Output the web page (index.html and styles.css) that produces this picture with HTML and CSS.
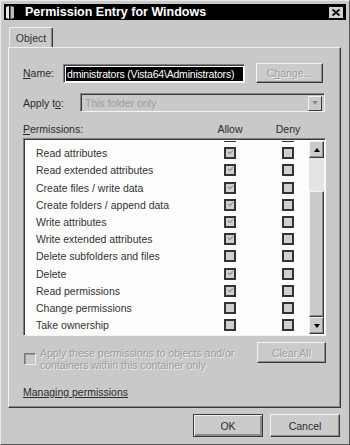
FILE: index.html
```html
<!DOCTYPE html>
<html lang="en">

<head>
    <meta charset="UTF-8">
    <meta name="viewport" content="width=device-width, initial-scale=1.0">
    <title>Permission Entry for Windows</title>
    <link rel="stylesheet" href="styles.css">
</head>

<body>
    <div class="window">
        <div class="titlebar">
            <svg class="title-icon" viewBox="0 0 8 13" width="8" height="13">
                <path d="M0 1 L3 0 L3 13 L0 12 Z" fill="#e8e8e8" />
                <path d="M4.5 0 L8 1 L8 12 L4.5 13 Z" fill="#bdbdbd" />
            </svg>
            <span class="title">Permission Entry for Windows</span>
            <span class="close">
                <svg viewBox="0 0 8 7" width="8" height="7">
                    <path d="M0.5 0.5 L7.5 6.5 M7.5 0.5 L0.5 6.5" stroke="#000" stroke-width="1.8" fill="none" />
                </svg>
            </span>
        </div>

        <div class="tabs">
            <span class="tab">Object</span>
        </div>

        <div class="panel">
            <div class="name-row">
                <span class="label name-label"><u>N</u>ame:</span>
                <div class="textbox">
                    <span class="selected">dministrators (Vista64\Administrators)</span>
                </div>
                <button class="btn change-btn" disabled>C<u>h</u>ange...</button>
            </div>

            <div class="apply-row">
                <span class="label apply-label">Apply t<u>o</u>:</span>
                <div class="select">
                    <span class="select-text">This folder only</span>
                    <span class="select-arrow"><span class="tri-down grey"></span></span>
                </div>
            </div>

            <div class="perm-head">
                <span class="label perm-label"><u>P</u>ermissions:</span>
                <span class="col-head">Allow</span>
                <span class="col-head">Deny</span>
            </div>

            <div class="list">
                <div class="rows">
                    <div class="row partial">
                        <span></span>
                        <span class="cb checked"></span>
                        <span class="cb"></span>
                    </div>
                    <div class="row">
                        <span>Read attributes</span>
                        <span class="cb checked"></span>
                        <span class="cb"></span>
                    </div>
                    <div class="row">
                        <span>Read extended attributes</span>
                        <span class="cb checked"></span>
                        <span class="cb"></span>
                    </div>
                    <div class="row">
                        <span>Create files / write data</span>
                        <span class="cb checked"></span>
                        <span class="cb"></span>
                    </div>
                    <div class="row">
                        <span>Create folders / append data</span>
                        <span class="cb checked"></span>
                        <span class="cb"></span>
                    </div>
                    <div class="row">
                        <span>Write attributes</span>
                        <span class="cb checked"></span>
                        <span class="cb"></span>
                    </div>
                    <div class="row">
                        <span>Write extended attributes</span>
                        <span class="cb checked"></span>
                        <span class="cb"></span>
                    </div>
                    <div class="row">
                        <span>Delete subfolders and files</span>
                        <span class="cb"></span>
                        <span class="cb"></span>
                    </div>
                    <div class="row">
                        <span>Delete</span>
                        <span class="cb checked"></span>
                        <span class="cb"></span>
                    </div>
                    <div class="row">
                        <span>Read permissions</span>
                        <span class="cb checked"></span>
                        <span class="cb"></span>
                    </div>
                    <div class="row">
                        <span>Change permissions</span>
                        <span class="cb"></span>
                        <span class="cb"></span>
                    </div>
                    <div class="row">
                        <span>Take ownership</span>
                        <span class="cb"></span>
                        <span class="cb"></span>
                    </div>
                </div>
                <div class="scrollbar">
                    <span class="sb-btn"><span class="tri-up"></span></span>
                    <span class="sb-track"></span>
                    <span class="sb-thumb"></span>
                    <span class="sb-btn"><span class="tri-down"></span></span>
                </div>
            </div>

            <div class="inherit-row">
                <span class="cb disabled"></span>
                <span class="inherit-text">Apply these permissions to objects and/or containers within this container only</span>
                <button class="btn clear-btn" disabled>Clear All</button>
            </div>

            <a class="help-link" href="#">Managing permissions</a>
        </div>

        <div class="footer">
            <button class="btn footer-btn default-btn">OK</button>
            <button class="btn footer-btn">Cancel</button>
        </div>
    </div>
</body>

</html>
```

FILE: styles.css
```css
body {
    margin: 0;
    background-color: #c9c9c9;
    font-family: "Liberation Sans", Arial, sans-serif;
    font-size: 10.5px;
    color: #2b2b2b;
}

.window {
    width: 350px;
    height: 445px;
    box-sizing: border-box;
    border: 1px solid;
    border-color: #e8e8e8 #555 #555 #e8e8e8;
    padding: 3px 3px 0 3px;
    display: flex;
    flex-direction: column;
}

.titlebar {
    height: 16px;
    background-color: #000;
    display: flex;
    align-items: center;
    padding: 0 3px 0 2px;
}

.title-icon {
    margin-right: 11px;
}

.title {
    flex: 1;
    color: #fff;
    font-weight: bold;
    font-size: 12.5px;
}

.close {
    width: 14px;
    height: 11px;
    background-color: #d2d2d2;
    display: flex;
    align-items: center;
    justify-content: center;
}

.tabs {
    display: flex;
    margin-top: 7px;
    padding-left: 5px;
}

.tab {
    width: 44px;
    height: 20px;
    box-sizing: border-box;
    border: 1px solid;
    border-color: #f0f0f0 #3a3a3a transparent #f0f0f0;
    border-bottom: none;
    border-radius: 2px 2px 0 0;
    box-shadow: inset -1px 0 #888;
    display: flex;
    align-items: center;
    justify-content: center;
    color: #333;
}

.panel {
    height: 361px;
    box-sizing: border-box;
    margin: 0 5px 0 4px;
    border: 1px solid;
    border-color: #f0f0f0 #3a3a3a #3a3a3a #f0f0f0;
    box-shadow: inset -1px -1px #8a8a8a;
    padding: 15px 14px 0 14px;
    display: flex;
    flex-direction: column;
}

.name-row,
.apply-row {
    display: flex;
    align-items: center;
}

.name-row {
    height: 20px;
}

.name-label {
    width: 40px;
}

.textbox {
    width: 182px;
    height: 19px;
    box-sizing: border-box;
    border: 1px solid;
    border-color: #808080 #f4f4f4 #f4f4f4 #808080;
    box-shadow: inset 1px 1px #3a3a3a;
    background-color: #fff;
    padding: 2px 1px 1px 2px;
    display: flex;
}

.selected {
    flex: 1;
    background-color: #000;
    color: #fff;
    white-space: nowrap;
    line-height: 14px;
    padding-left: 1px;
    letter-spacing: -0.2px;
}

.btn {
    font-family: "Liberation Sans", Arial, sans-serif;
    font-size: 10.5px;
    color: #2b2b2b;
    background-color: #cbcbcb;
    border: 1px solid;
    border-color: #f2f2f2 #3a3a3a #3a3a3a #f2f2f2;
    box-shadow: inset -1px -1px #8a8a8a;
    padding: 0;
}

.btn:disabled {
    color: #9c9c9c;
    text-shadow: 1px 1px #ececec;
}

.change-btn {
    width: 67px;
    height: 20px;
    margin-left: 11px;
}

.apply-row {
    height: 19px;
    margin-top: 10px;
}

.apply-label {
    width: 57px;
}

.select {
    width: 245px;
    height: 19px;
    box-sizing: border-box;
    border: 1px solid;
    border-color: #808080 #f4f4f4 #f4f4f4 #808080;
    box-shadow: inset 1px 1px #3a3a3a;
    display: flex;
    align-items: center;
    padding: 2px 2px 1px 4px;
}

.select-text {
    flex: 1;
    color: #9c9c9c;
}

.select-arrow {
    width: 14px;
    height: 15px;
    box-sizing: border-box;
    border: 1px solid;
    border-color: #f2f2f2 #3a3a3a #3a3a3a #f2f2f2;
    display: flex;
    align-items: center;
    justify-content: center;
}

.tri-down,
.tri-up {
    width: 0;
    height: 0;
    border-left: 3.5px solid transparent;
    border-right: 3.5px solid transparent;
}

.tri-down {
    border-top: 4px solid #000;
}

.tri-up {
    border-bottom: 4px solid #000;
}

.tri-down.grey {
    border-top-color: #8c8c8c;
}

.perm-head {
    display: flex;
    align-items: center;
    height: 14px;
    margin-top: 10px;
}

.perm-label {
    flex: 1;
}

.col-head {
    width: 40px;
    text-align: center;
    margin-right: 18px;
}

.list {
    height: 198px;
    margin-top: 2px;
    box-sizing: border-box;
    border: 1px solid;
    border-color: #808080 #f4f4f4 #f4f4f4 #808080;
    box-shadow: inset 1px 1px #3a3a3a;
    background-color: #fdfdfd;
    padding: 2px 1px 1px 2px;
    display: flex;
}

.rows {
    flex: 1;
    overflow: hidden;
}

.row {
    display: grid;
    grid-template-columns: 188px 12px 58px;
    height: 17.2px;
    align-items: center;
    padding-left: 10px;
    white-space: nowrap;
    color: #333;
}

.row .cb:last-child {
    margin-left: 46px;
}

.partial {
    margin-top: -13.5px;
}

.cb {
    width: 12px;
    height: 12px;
    box-sizing: border-box;
    border: 2px solid #333;
    background-color: #cfcfcf;
    position: relative;
}

.cb.checked::after {
    content: "";
    position: absolute;
    left: 2px;
    top: 1px;
    width: 4px;
    height: 2px;
    border-left: 1.5px solid #8a8a8a;
    border-bottom: 1.5px solid #8a8a8a;
    transform: rotate(-45deg);
}

.scrollbar {
    width: 15px;
    display: flex;
    flex-direction: column;
}

.sb-btn {
    height: 17px;
    box-sizing: border-box;
    background-color: #cbcbcb;
    border: 1px solid;
    border-color: #f2f2f2 #3a3a3a #3a3a3a #f2f2f2;
    box-shadow: inset -1px -1px #8a8a8a;
    display: flex;
    align-items: center;
    justify-content: center;
}

.sb-track {
    height: 33px;
    background-color: #e4e4e4;
}

.sb-thumb {
    flex: 1;
    box-sizing: border-box;
    background-color: #cbcbcb;
    border: 1px solid;
    border-color: #f2f2f2 #3a3a3a #3a3a3a #f2f2f2;
    box-shadow: inset -1px -1px #8a8a8a;
}

.inherit-row {
    display: flex;
    align-items: flex-start;
    margin-top: 6px;
}

.cb.disabled {
    margin-top: 11px;
    margin-left: 1px;
    border: 1px solid;
    border-color: #7a7a7a #ececec #ececec #7a7a7a;
    box-shadow: inset 1px 1px #9a9a9a;
    background-color: #c9c9c9;
}

.inherit-text {
    width: 195px;
    margin-top: 5px;
    margin-left: 4px;
    line-height: 12px;
    color: #9c9c9c;
    text-shadow: 1px 1px #ececec;
}

.clear-btn {
    width: 69px;
    height: 21px;
    margin-left: auto;
}

.help-link {
    align-self: flex-start;
    margin-top: 15px;
    line-height: 13px;
    color: #2b2b2b;
}

.footer {
    display: flex;
    justify-content: flex-end;
    gap: 7px;
    margin-top: 6px;
    padding-right: 6px;
}

.footer-btn {
    width: 70px;
    height: 23px;
}

.default-btn {
    border-color: #3a3a3a;
    box-shadow: inset 1px 1px #f2f2f2, inset -2px -2px #8a8a8a;
}
```
